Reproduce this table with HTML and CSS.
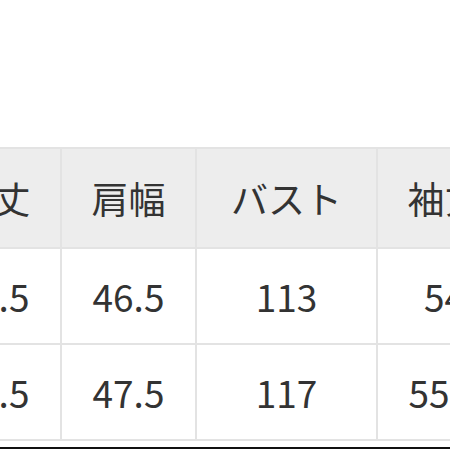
FILE: index.html
```html
<!DOCTYPE html>
<html lang="ja">
<head>
<meta charset="utf-8">
<link rel="stylesheet" href="styles.css">
</head>
<body>
<div class="page">
  <table class="size-table">
    <colgroup>
      <col class="c-narrow"><col class="c-narrow"><col class="c-wide"><col class="c-narrow">
    </colgroup>
    <thead>
      <tr><th>着丈</th><th>肩幅</th><th>バスト</th><th>袖丈</th></tr>
    </thead>
    <tbody>
      <tr><td>72.5</td><td>46.5</td><td>113</td><td>54</td></tr>
      <tr><td>73.5</td><td>47.5</td><td>117</td><td>55.5</td></tr>
    </tbody>
  </table>
  <div class="bottom-bar"></div>
</div>
</body>
</html>
```
FILE: styles.css
```css
html, body {
  margin: 0;
  padding: 0;
  background: #ffffff;
  overflow: hidden;
  width: 450px;
  height: 450px;
}
.page {
  padding-top: 147px;
  font-family: "Noto Sans CJK JP", "Noto Sans", sans-serif;
  color: #333333;
}
.size-table {
  border-collapse: collapse;
  table-layout: fixed;
  width: 586px;
  margin-left: -75px;
}
.c-narrow { width: 135px; }
.c-wide { width: 181px; }
.size-table th,
.size-table td {
  border: 2px solid #e3e3e3;
  text-align: center;
  font-size: 37px;
  font-weight: 400;
  padding: 0;
  white-space: nowrap;
  overflow: hidden;
}
.size-table th {
  background: #ededed;
  height: 98px;
}
.size-table td {
  height: 94px;
}
.bottom-bar {
  margin-top: 6px;
  height: 2px;
  background: #111111;
}
```
